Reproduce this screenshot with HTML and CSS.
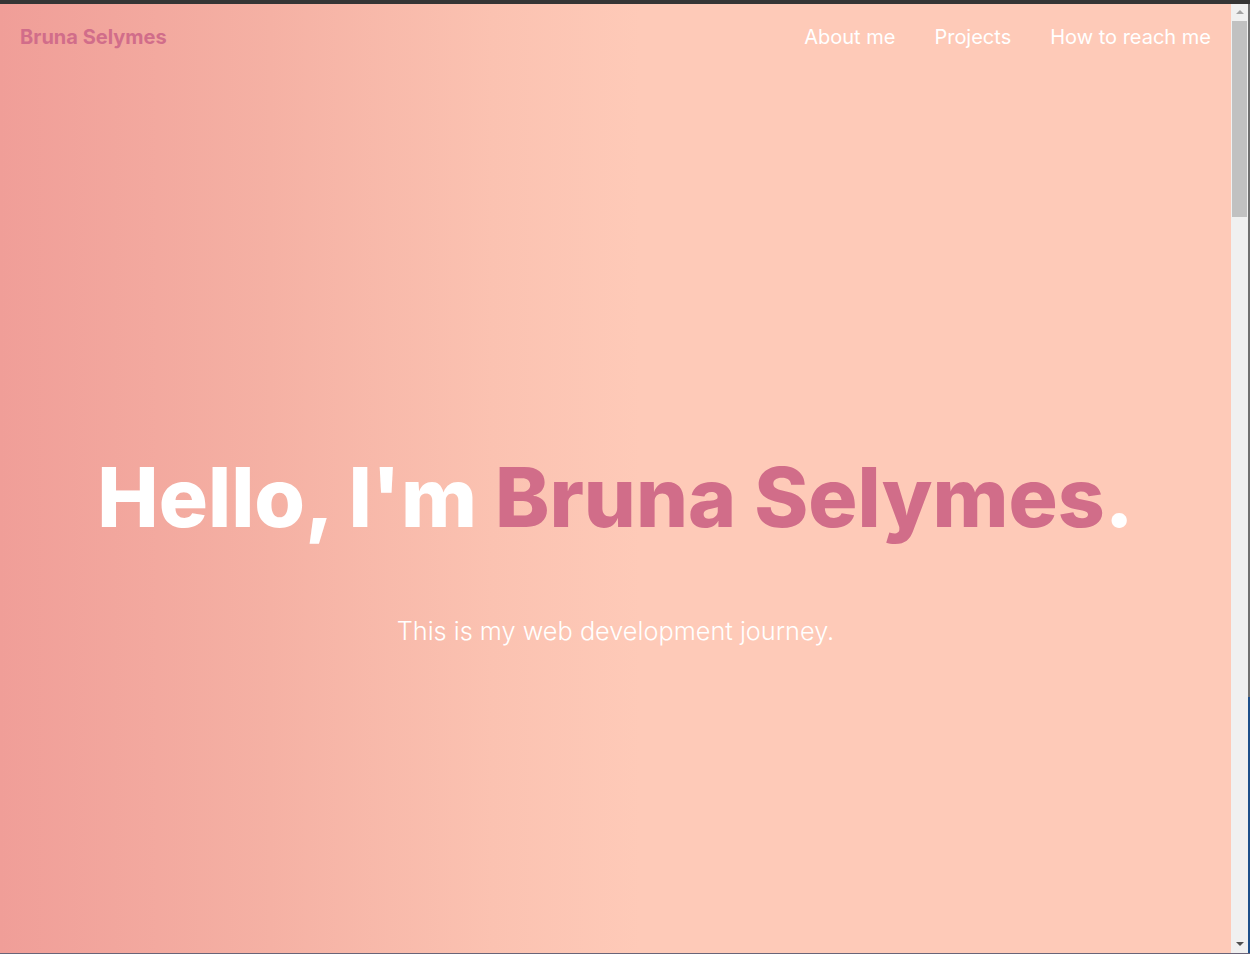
FILE: index.html
```html
<!DOCTYPE html>
<html lang="en">
<head>
<meta charset="utf-8">
<title>Bruna Selymes</title>
<link rel="stylesheet" href="styles.css">
</head>
<body>
<div class="window">
  <div class="topbar"></div>
  <div class="frame">
    <main class="page">
      <header class="nav">
        <a class="logo" href="#">Bruna Selymes</a>
        <nav class="links">
          <a href="#">About me</a>
          <a href="#">Projects</a>
          <a href="#">How to reach me</a>
        </nav>
      </header>
      <section class="hero">
        <h1 class="title">Hello, I'm <span class="name">Bruna Selymes</span>.</h1>
        <p class="subtitle">This is my web development journey.</p>
      </section>
    </main>
    <div class="scrollbar">
      <div class="arrow up"></div>
      <div class="track"><div class="thumb"></div></div>
      <div class="arrow down"></div>
    </div>
    <div class="edge"></div>
  </div>
</div>
</body>
</html>
```

FILE: styles.css
```css
html, body {
  margin: 0;
  padding: 0;
  height: 100%;
  overflow: hidden;
}
.window {
  display: flex;
  flex-direction: column;
  height: 954px;
  width: 1250px;
}
.topbar {
  height: 4px;
  background: #353535;
  flex: none;
}
.frame {
  flex: 1;
  display: flex;
  min-height: 0;
  border-bottom: 1px solid #6a6478;
}
.page {
  flex: 1;
  display: flex;
  flex-direction: column;
  background: linear-gradient(to right, #f09e98 0%, #f5b1a4 22%, #fbc2b1 40%, #fecab8 52%, #fecab8 100%);
  font-family: "Inter", "Noto Sans", sans-serif;
}
.nav {
  display: flex;
  justify-content: space-between;
  align-items: center;
  height: 66px;
  padding: 0 20px;
}
.logo {
  color: #d16d8a;
  font-weight: 700;
  font-size: 20px;
  text-decoration: none;
}
.links {
  display: flex;
  gap: 39px;
}
.links a {
  color: #ffffff;
  font-size: 20px;
  font-weight: 400;
  text-decoration: none;
}
.hero {
  display: flex;
  flex-direction: column;
  align-items: center;
  padding-top: 378px;
}
.title {
  margin: 0;
  color: #ffffff;
  font-size: 82px;
  font-weight: 800;
  line-height: 100px;
}
.name {
  color: #d16d89;
}
.subtitle {
  margin: 67px 0 0;
  color: #ffffff;
  font-size: 25.3px;
  font-weight: 300;
}
.scrollbar {
  width: 17px;
  flex: none;
  background: #f0f0f0;
  display: flex;
  flex-direction: column;
}
.arrow {
  height: 17px;
  flex: none;
  position: relative;
}
.arrow::after {
  content: "";
  position: absolute;
  left: 5px;
  top: 6px;
  border-left: 4px solid transparent;
  border-right: 4px solid transparent;
}
.arrow.up::after {
  border-bottom: 4px solid #a3a3a3;
}
.arrow.down::after {
  border-top: 4px solid #505050;
}
.track {
  flex: 1;
}
.thumb {
  margin: 0 1px;
  height: 196px;
  background: #c1c1c1;
}
.edge {
  width: 2px;
  flex: none;
  background: linear-gradient(to bottom, #707070 0%, #707070 73%, #1d4f8a 73%, #1d4f8a 100%);
}
```
